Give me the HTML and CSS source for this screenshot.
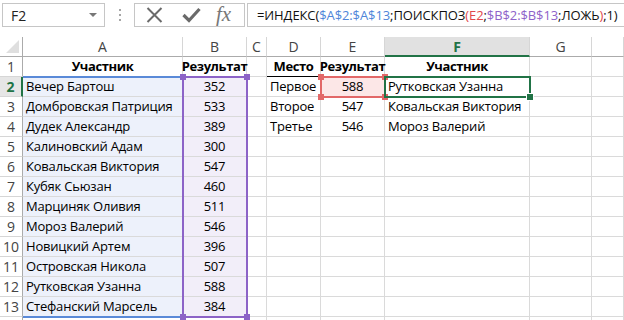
FILE: index.html
```html
<!DOCTYPE html>
<html>
<head>
    <title>Участники</title>
    <meta charset="UTF-8">
    <link rel="stylesheet" href="styles.css">
</head>
<body>
    <div class="formula-bar">
        <div class="name-box">
            <span>F2</span>
            <span class="name-arrow"></span>
        </div>
        <div class="grip"><i></i><i></i><i></i></div>
        <div class="fx-buttons">
            <svg class="icon-cancel" width="17" height="16" viewBox="0 0 17 16">
                <path d="M1.5 1 L15.5 15 M15.5 1 L1.5 15" stroke="#6a6a6a" stroke-width="2" fill="none"/>
            </svg>
            <svg class="icon-enter" width="19" height="16" viewBox="0 0 19 16">
                <path d="M1.5 8 L7 13.5 L17.5 2" stroke="#6a6a6a" stroke-width="3.2" fill="none"/>
            </svg>
            <span class="fx">fx</span>
        </div>
        <div class="formula-input">=ИНДЕКС(<span class="ref-blue">$A$2:$A$13</span>;ПОИСКПОЗ<span class="ref-red">(E2</span>;<span class="ref-purple">$B$2:$B$13</span>;ЛОЖЬ<span class="ref-red">)</span>;1)</div>
    </div>

    <div class="sheet-wrap">
        <div class="sheet">
            <!-- column headers -->
            <div class="ch corner"></div>
            <div class="ch">A</div>
            <div class="ch">B</div>
            <div class="ch">C</div>
            <div class="ch">D</div>
            <div class="ch">E</div>
            <div class="ch active">F</div>
            <div class="ch">G</div>
            <div class="ch"></div>

            <!-- 1 -->
            <div class="rh">1</div>
            <div class="c head">Участник</div>
            <div class="c head">Результат</div>
            <div class="c"></div>
            <div class="c head under">Место</div>
            <div class="c head under">Результат</div>
            <div class="c head under">Участник</div>
            <div class="c"></div>
            <div class="c"></div>

            <!-- 2 -->
            <div class="rh active">2</div>
            <div class="c fill-blue">Вечер Бартош</div>
            <div class="c fill-purple num">352</div>
            <div class="c"></div>
            <div class="c">Первое</div>
            <div class="c fill-red num">588</div>
            <div class="c">Рутковская Узанна</div>
            <div class="c"></div>
            <div class="c"></div>

            <!-- 3 -->
            <div class="rh">3</div>
            <div class="c fill-blue">Домбровская Патриция</div>
            <div class="c fill-purple num">533</div>
            <div class="c"></div>
            <div class="c">Второе</div>
            <div class="c num">547</div>
            <div class="c">Ковальская Виктория</div>
            <div class="c"></div>
            <div class="c"></div>

            <!-- 4 -->
            <div class="rh">4</div>
            <div class="c fill-blue">Дудек Александр</div>
            <div class="c fill-purple num">389</div>
            <div class="c"></div>
            <div class="c">Третье</div>
            <div class="c num">546</div>
            <div class="c">Мороз Валерий</div>
            <div class="c"></div>
            <div class="c"></div>

            <!-- 5 -->
            <div class="rh">5</div>
            <div class="c fill-blue">Калиновский Адам</div>
            <div class="c fill-purple num">300</div>
            <div class="c"></div><div class="c"></div><div class="c"></div><div class="c"></div><div class="c"></div><div class="c"></div>

            <!-- 6 -->
            <div class="rh">6</div>
            <div class="c fill-blue">Ковальская Виктория</div>
            <div class="c fill-purple num">547</div>
            <div class="c"></div><div class="c"></div><div class="c"></div><div class="c"></div><div class="c"></div><div class="c"></div>

            <!-- 7 -->
            <div class="rh">7</div>
            <div class="c fill-blue">Кубяк Сьюзан</div>
            <div class="c fill-purple num">460</div>
            <div class="c"></div><div class="c"></div><div class="c"></div><div class="c"></div><div class="c"></div><div class="c"></div>

            <!-- 8 -->
            <div class="rh">8</div>
            <div class="c fill-blue">Марциняк Оливия</div>
            <div class="c fill-purple num">511</div>
            <div class="c"></div><div class="c"></div><div class="c"></div><div class="c"></div><div class="c"></div><div class="c"></div>

            <!-- 9 -->
            <div class="rh">9</div>
            <div class="c fill-blue">Мороз Валерий</div>
            <div class="c fill-purple num">546</div>
            <div class="c"></div><div class="c"></div><div class="c"></div><div class="c"></div><div class="c"></div><div class="c"></div>

            <!-- 10 -->
            <div class="rh">10</div>
            <div class="c fill-blue">Новицкий Артем</div>
            <div class="c fill-purple num">396</div>
            <div class="c"></div><div class="c"></div><div class="c"></div><div class="c"></div><div class="c"></div><div class="c"></div>

            <!-- 11 -->
            <div class="rh">11</div>
            <div class="c fill-blue">Островская Никола</div>
            <div class="c fill-purple num">507</div>
            <div class="c"></div><div class="c"></div><div class="c"></div><div class="c"></div><div class="c"></div><div class="c"></div>

            <!-- 12 -->
            <div class="rh">12</div>
            <div class="c fill-blue">Рутковская Узанна</div>
            <div class="c fill-purple num">588</div>
            <div class="c"></div><div class="c"></div><div class="c"></div><div class="c"></div><div class="c"></div><div class="c"></div>

            <!-- 13 -->
            <div class="rh">13</div>
            <div class="c fill-blue">Стефанский Марсель</div>
            <div class="c fill-purple num">384</div>
            <div class="c"></div><div class="c"></div><div class="c"></div><div class="c"></div><div class="c"></div><div class="c"></div>

            <!-- next row, only its top edge is visible -->
            <div class="rh"></div>
            <div class="c"></div><div class="c"></div><div class="c"></div><div class="c"></div><div class="c"></div><div class="c"></div><div class="c"></div><div class="c"></div>
        </div>

        <!-- range highlights from the formula, drawn over the cells -->
        <div class="sheet ranges">
            <div class="range range-blue"></div>
            <div class="range range-purple">
                <span class="handle tl"></span><span class="handle tr"></span>
                <span class="handle bl"></span><span class="handle br"></span>
            </div>
            <div class="range range-red">
                <span class="handle tl"></span><span class="handle tr"></span>
                <span class="handle bl"></span><span class="handle br"></span>
            </div>
            <div class="range range-active">
                <span class="fill-handle"></span>
            </div>
        </div>
    </div>
</body>
</html>
```

FILE: styles.css
```css
body {
    margin: 0;
    background-color: white;
    font-family: 'Open Sans', 'Noto Sans', sans-serif;
    color: #000;
    overflow: hidden;
}

/* formula bar */

.formula-bar {
    display: flex;
    height: 24px;
    margin-top: 3px;
    padding-left: 2px;
}

.name-box {
    width: 103px;
    box-sizing: border-box;
    border: 1px solid #c6c6c6;
    display: flex;
    align-items: center;
    justify-content: space-between;
    padding: 0 7px 0 8px;
    font-size: 14px;
    color: #222;
}

.name-arrow {
    width: 0;
    height: 0;
    border-left: 4px solid transparent;
    border-right: 4px solid transparent;
    border-top: 4px solid #777;
}

.grip {
    width: 29px;
    display: flex;
    flex-direction: column;
    align-items: center;
    justify-content: center;
    gap: 3px;
}

.grip i {
    width: 2px;
    height: 2px;
    background-color: #a6a6a6;
}

.fx-buttons {
    width: 111px;
    box-sizing: border-box;
    border: 1px solid #c6c6c6;
    display: flex;
    align-items: center;
    padding-left: 11px;
}

.icon-enter {
    margin-left: 19px;
}

.fx {
    margin-left: 15px;
    font-family: 'Liberation Serif', serif;
    font-style: italic;
    font-size: 21px;
    color: #777;
    line-height: 1;
    margin-top: -2px;
}

.formula-input {
    flex: 1;
    min-width: 0;
    margin-left: 2px;
    margin-right: -10px;
    border: 1px solid #c6c6c6;
    padding-left: 9px;
    font-size: 13px;
    letter-spacing: -0.1px;
    line-height: 22px;
    white-space: nowrap;
    overflow: hidden;
    color: #111;
}

.ref-blue { color: #4e85d9; }
.ref-red { color: #e0474c; }
.ref-purple { color: #8e62c9; }

/* sheet grid */

.sheet-wrap {
    position: relative;
    margin-top: 10px;
    height: 283px;
    overflow: hidden;
}

.sheet {
    display: grid;
    grid-template-columns: 23px 160px 64px 20px 54px 64px 145px 62px 1fr;
    grid-auto-rows: 20px;
    font-size: 13px;
}

.ch, .rh, .c {
    box-sizing: border-box;
    border-right: 1px solid #dadada;
    border-bottom: 1px solid #dadada;
    white-space: nowrap;
    min-width: 0;
}

.ch {
    display: flex;
    align-items: center;
    justify-content: center;
    font-size: 14px;
    color: #444;
    border-right-color: #d6d6d6;
    border-bottom-color: #ababab;
}

.ch.active {
    background-color: #e1e1e1;
    color: #217346;
    font-weight: bold;
    border-bottom: 2px solid #217346;
}

.corner {
    position: relative;
    border-right-color: #ababab;
}

.corner::after {
    content: "";
    position: absolute;
    right: 3px;
    bottom: 3px;
    border-left: 13px solid transparent;
    border-bottom: 13px solid #dfdfdf;
}

.rh {
    display: flex;
    align-items: center;
    justify-content: center;
    font-size: 14px;
    color: #444;
    border-right-color: #ababab;
    border-bottom-color: #d6d6d6;
}

.rh.active {
    background-color: #e6e6e6;
    color: #217346;
    font-weight: bold;
    border-right: 2px solid #217346;
}

.c {
    display: flex;
    align-items: center;
    padding-left: 3px;
    line-height: 19px;
    letter-spacing: -0.2px;
}

.c.head {
    justify-content: center;
    padding-left: 0;
    font-weight: bold;
    letter-spacing: -0.4px;
}

.c.under {
    border-bottom-color: #000;
}

.c.num {
    justify-content: center;
    padding-left: 0;
}

.fill-blue { background-color: #edf1fb; }
.fill-purple { background-color: #f2eef9; }
.fill-red { background-color: #fce7e7; }

/* reference highlights */

.ranges {
    position: absolute;
    inset: 0;
    grid-template-rows: repeat(15, 20px);
}

.range {
    position: relative;
    margin: -1px;
}

.range-blue {
    grid-column: 2;
    grid-row: 3 / 15;
    border-top: 2px solid #5a8ad8;
    border-bottom: 2px solid #5a8ad8;
    margin-left: 0;
}

.range-purple {
    grid-column: 3;
    grid-row: 3 / 15;
    border: 2px solid #8c63c7;
    color: #8c63c7;
}

.range-red {
    grid-column: 6;
    grid-row: 3;
    border: 2px solid #e26868;
    color: #e26868;
}

.range-active {
    grid-column: 7;
    grid-row: 3;
    border: 2px solid #217346;
}

.handle {
    position: absolute;
    width: 6px;
    height: 6px;
    background-color: currentColor;
}

.handle.tl { top: -4px; left: -4px; }
.handle.tr { top: -4px; right: -4px; }
.handle.bl { bottom: -4px; left: -4px; }
.handle.br { bottom: -4px; right: -4px; }

.fill-handle {
    position: absolute;
    right: -5px;
    bottom: -5px;
    width: 6px;
    height: 6px;
    background-color: #217346;
    border: 1px solid white;
}
```
